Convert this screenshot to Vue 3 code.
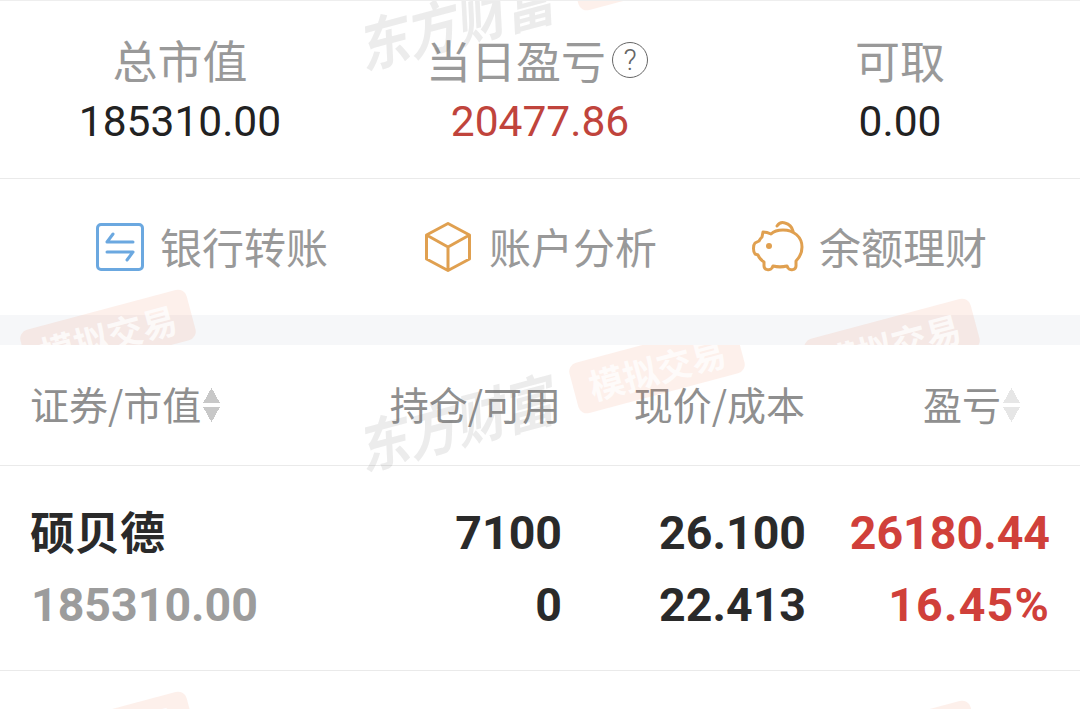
<template>
  <div class="page">
    <section class="top">
      <div class="summary">
        <div v-for="item in summary" :key="item.label" class="summary-col">
          <div class="summary-label">
            {{ item.label }}
            <span v-if="item.help" class="help">?</span>
          </div>
          <div class="summary-value" :class="{ red: item.red }">{{ item.value }}</div>
        </div>
      </div>

      <div class="actions">
        <div class="action">
          <svg class="icon-bank" viewBox="0 0 48 48" fill="none" stroke="#6ba8e0" stroke-width="3" stroke-linejoin="round">
            <rect x="1.5" y="1.5" width="45" height="45" rx="3.5" />
            <path d="M11 19h26M11 19l6-8M37 29H11M37 29l-6 8" stroke-linecap="round" />
          </svg>
          <span>银行转账</span>
        </div>
        <div class="action">
          <svg class="icon-box" viewBox="0 0 46 50" fill="none" stroke="#e0a050" stroke-width="3" stroke-linejoin="round">
            <path d="M23 1.5 44.5 13v24L23 48.5 1.5 37V13zM1.5 13 23 25l21.5-12M23 25v23.5" />
          </svg>
          <span>账户分析</span>
        </div>
        <div class="action">
          <svg class="icon-pig" viewBox="0 0 52 52" fill="none" stroke="#e0a050" stroke-width="3" stroke-linejoin="round" stroke-linecap="round">
            <path d="M11 11c3 0 6 1 8 2 3-3 8-4 12-4 11 0 19 7 19 17 0 7-3 11-6 14v5c0 4-6 5-8 2l-1-2c-4 1-10 1-14 0l-1 2c-2 3-8 2-8-2v-4c-3-2-5-4-6-7l-3-1c-2-2-2-9 0-11l4-2c1-2 2-3 3-4z" />
            <path d="M25 5c2-3 5-4 8-3 4 1 7 4 8 8" />
            <circle cx="17" cy="25" r="3" fill="#e0a050" stroke="none" />
          </svg>
          <span>余额理财</span>
        </div>
      </div>

      <div class="band"></div>

      <div class="wm-text wm-text-a">东方财富</div>
      <div class="wm-badge wm-a">模拟交易</div>
      <div class="wm-badge wm-b">模拟交易</div>
      <div class="wm-badge wm-c">模拟交易</div>
    </section>

    <section class="table">
      <div class="thead">
        <div class="th first">证券/市值<i class="sort"></i></div>
        <div class="th right">持仓/可用</div>
        <div class="th right">现价/成本</div>
        <div class="th right last">盈亏<i class="sort light"></i></div>
      </div>

      <div class="row">
        <div class="cell">
          <div class="name">硕贝德</div>
          <div class="num muted">185310.00</div>
        </div>
        <div class="cell end">
          <div class="num">7100</div>
          <div class="num">0</div>
        </div>
        <div class="cell end">
          <div class="num">26.100</div>
          <div class="num">22.413</div>
        </div>
        <div class="cell end">
          <div class="num red-bold">26180.44</div>
          <div class="num red-bold pct">16.45%</div>
        </div>
      </div>

      <div class="wm-text wm-text-b">东方财富</div>
      <div class="wm-badge wm-d">模拟交易</div>
      <div class="wm-badge wm-e">模拟交易</div>
      <div class="wm-badge wm-f">模拟交易</div>
    </section>
  </div>
</template>

<script setup>
const summary = [
  { label: '总市值', value: '185310.00' },
  { label: '当日盈亏', value: '20477.86', red: true, help: true },
  { label: '可取', value: '0.00' }
]
</script>

<style>
html,
body {
  margin: 0;
  background: #fff;
  overflow: hidden;
}
</style>

<style scoped>
.page {
  width: 1080px;
  height: 709px;
  font-family: Roboto, "Noto Sans CJK SC", sans-serif;
  background: #fff;
  overflow: hidden;
}

.top,
.table {
  position: relative;
  overflow: hidden;
}

.top {
  height: 345px;
  border-top: 1px solid #eee;
  box-sizing: border-box;
}

.table {
  height: 364px;
}

.summary {
  display: grid;
  grid-template-columns: repeat(3, 1fr);
  height: 178px;
  box-sizing: border-box;
  padding-top: 32px;
  border-bottom: 1px solid #eaeaea;
}

.summary-col {
  text-align: center;
}

.summary-label {
  display: flex;
  justify-content: center;
  align-items: center;
  height: 54px;
  font-size: 45px;
  line-height: 54px;
  color: #999;
  font-family: "Noto Sans CJK SC", sans-serif;
}

.help {
  width: 34px;
  height: 34px;
  margin: 0 6px 0 6px;
  border: 1.5px solid #666;
  border-radius: 50%;
  font-family: Roboto, sans-serif;
  font-size: 29px;
  line-height: 34px;
  font-weight: 300;
  color: #666;
}

.summary-value {
  margin-top: 10px;
  font-size: 42.5px;
  line-height: 50px;
  color: #222;
}

.summary-value.red {
  color: #c0443c;
}

.actions {
  display: grid;
  grid-template-columns: repeat(3, 328px);
  align-items: center;
  height: 136px;
  box-sizing: border-box;
  padding-left: 96px;
}

.action {
  display: flex;
  align-items: center;
  font-family: "Noto Sans CJK SC", sans-serif;
  font-size: 42px;
  color: #999;
}

.action span {
  margin: -4px 0 0 17px;
}

.icon-bank {
  width: 48px;
  height: 48px;
  margin-right: -1px;
}

.icon-box {
  width: 46px;
  height: 50px;
  margin: 0 1px 0 1px;
}

.icon-pig {
  width: 52px;
  height: 52px;
  margin-right: -2px;
}

.band {
  height: 30px;
  background: #f6f7f9;
}

.thead,
.row {
  display: grid;
  grid-template-columns: 286px repeat(3, 244px);
  padding: 0 31px;
}

.thead {
  height: 121px;
  box-sizing: border-box;
  padding-bottom: 4px;
  align-items: center;
  border-bottom: 1px solid #eaeaea;
}

.th {
  display: flex;
  align-items: center;
  font-family: "Noto Sans CJK SC", sans-serif;
  font-size: 39px;
  color: #8f8f8f;
}

.th.first {
  margin-left: -1px;
}

.right {
  justify-content: flex-end;
}

.last {
  padding-right: 29px;
}

.sort {
  display: block;
  width: 17px;
  height: 36px;
  margin: 4px 0 0 2px;
  flex: none;
  background:
    linear-gradient(to bottom right, transparent 50%, #c8c8c8 50%) 0 0 / 9px 16px no-repeat,
    linear-gradient(to bottom left, transparent 50%, #c8c8c8 50%) 8px 0 / 9px 16px no-repeat,
    linear-gradient(to top right, transparent 50%, #c8c8c8 50%) 0 20px / 9px 16px no-repeat,
    linear-gradient(to top left, transparent 50%, #c8c8c8 50%) 8px 20px / 9px 16px no-repeat;
}

.sort.light {
  background:
    linear-gradient(to bottom right, transparent 50%, #e6e6e6 50%) 0 0 / 9px 16px no-repeat,
    linear-gradient(to bottom left, transparent 50%, #e6e6e6 50%) 8px 0 / 9px 16px no-repeat,
    linear-gradient(to top right, transparent 50%, #e6e6e6 50%) 0 20px / 9px 16px no-repeat,
    linear-gradient(to top left, transparent 50%, #e6e6e6 50%) 8px 20px / 9px 16px no-repeat;
}

.row {
  height: 205px;
  box-sizing: border-box;
  padding-top: 40px;
  border-bottom: 1px solid #eaeaea;
}

.cell {
  display: flex;
  flex-direction: column;
  gap: 18px;
}

.cell.end {
  align-items: flex-end;
  margin-right: -1px;
}

.name {
  height: 54px;
  margin-left: -1px;
  font-family: "Noto Sans CJK SC", sans-serif;
  font-size: 45px;
  line-height: 50px;
  font-weight: 700;
  color: #2a2a2a;
}

.num {
  height: 54px;
  font-size: 46.5px;
  line-height: 54px;
  font-weight: 700;
  color: #2a2a2a;
}

.num.muted {
  color: #9c9c9c;
}

.num.red-bold {
  color: #d0403a;
}

.num.pct {
  letter-spacing: 1.2px;
}

.wm-text {
  position: absolute;
  left: 359px;
  font-family: "Noto Sans CJK SC", sans-serif;
  font-size: 50px;
  line-height: 56px;
  font-weight: 700;
  white-space: nowrap;
  color: rgba(120, 120, 120, 0.14);
  transform: rotate(-15deg) skewX(-12deg) scaleY(1.15);
  pointer-events: none;
}

.wm-text-a {
  top: -11px;
}

.wm-text-b {
  top: 46px;
}

.wm-badge {
  position: absolute;
  width: 172px;
  height: 52px;
  border-radius: 9px;
  background: rgba(232, 108, 60, 0.1);
  color: rgba(255, 255, 255, 0.75);
  font-family: "Noto Sans CJK SC", sans-serif;
  font-size: 35px;
  line-height: 52px;
  font-weight: 700;
  text-align: center;
  white-space: nowrap;
  transform: rotate(-15deg);
  pointer-events: none;
}

.wm-a {
  left: 571px;
  top: -62px;
}

.wm-b {
  left: 22px;
  top: 308px;
}

.wm-c {
  left: 806px;
  top: 317px;
}

.wm-d {
  left: 571px;
  top: -3px;
}

.wm-e {
  left: 22px;
  top: 366px;
}

.wm-f {
  left: 806px;
  top: 375px;
}
</style>
